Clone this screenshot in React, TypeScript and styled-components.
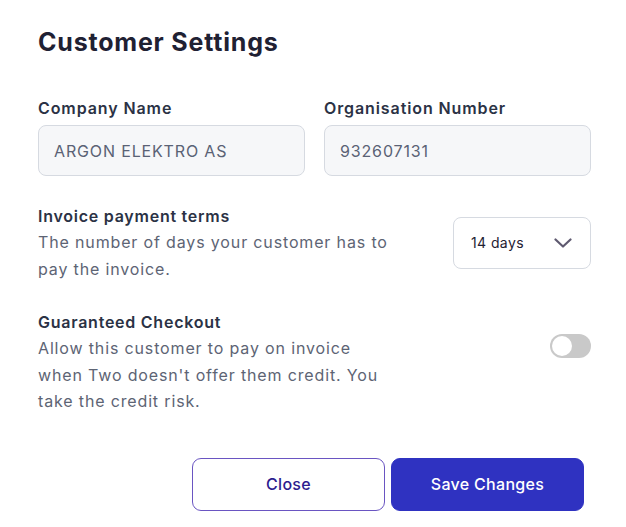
import React from "react";
import styled, { createGlobalStyle } from "styled-components";

const GlobalStyle = createGlobalStyle`
  html, body {
    margin: 0;
    padding: 0;
    background: #ffffff;
  }
  body {
    font-family: Inter, "Noto Sans", "Liberation Sans", sans-serif;
    -webkit-font-smoothing: antialiased;
  }
  * { box-sizing: border-box; }
`;

const Panel = styled.div`
  width: 626px;
  height: 527px;
  padding: 26px 35px 0 38px;
  display: flex;
  flex-direction: column;
`;

const Title = styled.h1`
  margin: 0;
  font-size: 25px;
  line-height: 32px;
  font-weight: 700;
  color: #1f2133;
  letter-spacing: 0.8px;
`;

const FieldGrid = styled.div`
  margin-top: 40px;
  display: grid;
  grid-template-columns: 1fr 1fr;
  column-gap: 19px;
`;

const Field = styled.div`
  display: flex;
  flex-direction: column;
  gap: 7px;
`;

const Label = styled.label`
  font-size: 16px;
  line-height: 20px;
  font-weight: 600;
  color: #2b3245;
  letter-spacing: 0.9px;
`;

const Input = styled.div`
  height: 51px;
  border: 1px solid #d6dae1;
  border-radius: 8px;
  background: #f6f7f9;
  padding: 0 15px;
  display: flex;
  align-items: center;
  font-size: 16px;
  color: #5a6275;
  letter-spacing: 0.85px;
`;

const Section = styled.div<{ $top: number }>`
  margin-top: ${(p) => p.$top}px;
  display: flex;
  align-items: center;
  justify-content: space-between;
`;

const TextBlock = styled.div`
  width: 356px;
`;

const SectionTitle = styled.div`
  font-size: 16px;
  line-height: 26px;
  font-weight: 600;
  color: #2b3245;
  letter-spacing: 0.75px;
`;

const Description = styled.div`
  font-size: 16px;
  line-height: 26.5px;
  color: #5d6474;
  letter-spacing: 0.85px;
`;

const Select = styled.div`
  width: 138px;
  height: 52px;
  border: 1px solid #d6dae1;
  border-radius: 8px;
  background: #ffffff;
  display: flex;
  align-items: center;
  justify-content: space-between;
  padding: 0 18px 0 17px;
  font-size: 14px;
  color: #1f2133;
  letter-spacing: 0.4px;
`;

const Toggle = styled.div`
  align-self: flex-start;
  margin-top: 25px;
  width: 41px;
  height: 24px;
  border-radius: 12px;
  background: #c9c9c9;
  padding: 2px;
  display: flex;
  align-items: center;
`;

const Knob = styled.div`
  width: 20px;
  height: 20px;
  border-radius: 50%;
  background: #ffffff;
`;

const Actions = styled.div`
  margin-top: 43px;
  padding-right: 7px;
  display: flex;
  justify-content: flex-end;
  gap: 6px;
`;

const Button = styled.button<{ $primary?: boolean }>`
  width: 193px;
  height: 53px;
  border-radius: 9px;
  font-family: inherit;
  font-size: 16px;
  font-weight: 500;
  letter-spacing: 0.3px;
  cursor: pointer;
  border: 1px solid ${(p) => (p.$primary ? "#2f32c1" : "#6a55c2")};
  background: ${(p) => (p.$primary ? "#2f32c1" : "#ffffff")};
  color: ${(p) => (p.$primary ? "#ffffff" : "#2c1c8f")};
`;

const Chevron = () => (
  <svg width="18" height="10" viewBox="0 0 18 10" fill="none">
    <path
      d="M1.5 1.5L9 8.5L16.5 1.5"
      stroke="#5f5a70"
      strokeWidth="2.2"
      strokeLinecap="round"
      strokeLinejoin="round"
    />
  </svg>
);

export default function App() {
  return (
    <>
      <GlobalStyle />
      <Panel>
        <Title>Customer Settings</Title>
        <FieldGrid>
          <Field>
            <Label>Company Name</Label>
            <Input>ARGON ELEKTRO AS</Input>
          </Field>
          <Field>
            <Label>Organisation Number</Label>
            <Input>932607131</Input>
          </Field>
        </FieldGrid>
        <Section $top={27}>
          <TextBlock>
            <SectionTitle>Invoice payment terms</SectionTitle>
            <Description>
              The number of days your customer has to pay the invoice.
            </Description>
          </TextBlock>
          <Select>
            <span>14 days</span>
            <Chevron />
          </Select>
        </Section>
        <Section $top={27}>
          <TextBlock>
            <SectionTitle>Guaranteed Checkout</SectionTitle>
            <Description>
              Allow this customer to pay on invoice when Two doesn't offer them
              credit. You take the credit risk.
            </Description>
          </TextBlock>
          <Toggle>
            <Knob />
          </Toggle>
        </Section>
        <Actions>
          <Button>Close</Button>
          <Button $primary>Save Changes</Button>
        </Actions>
      </Panel>
    </>
  );
}
